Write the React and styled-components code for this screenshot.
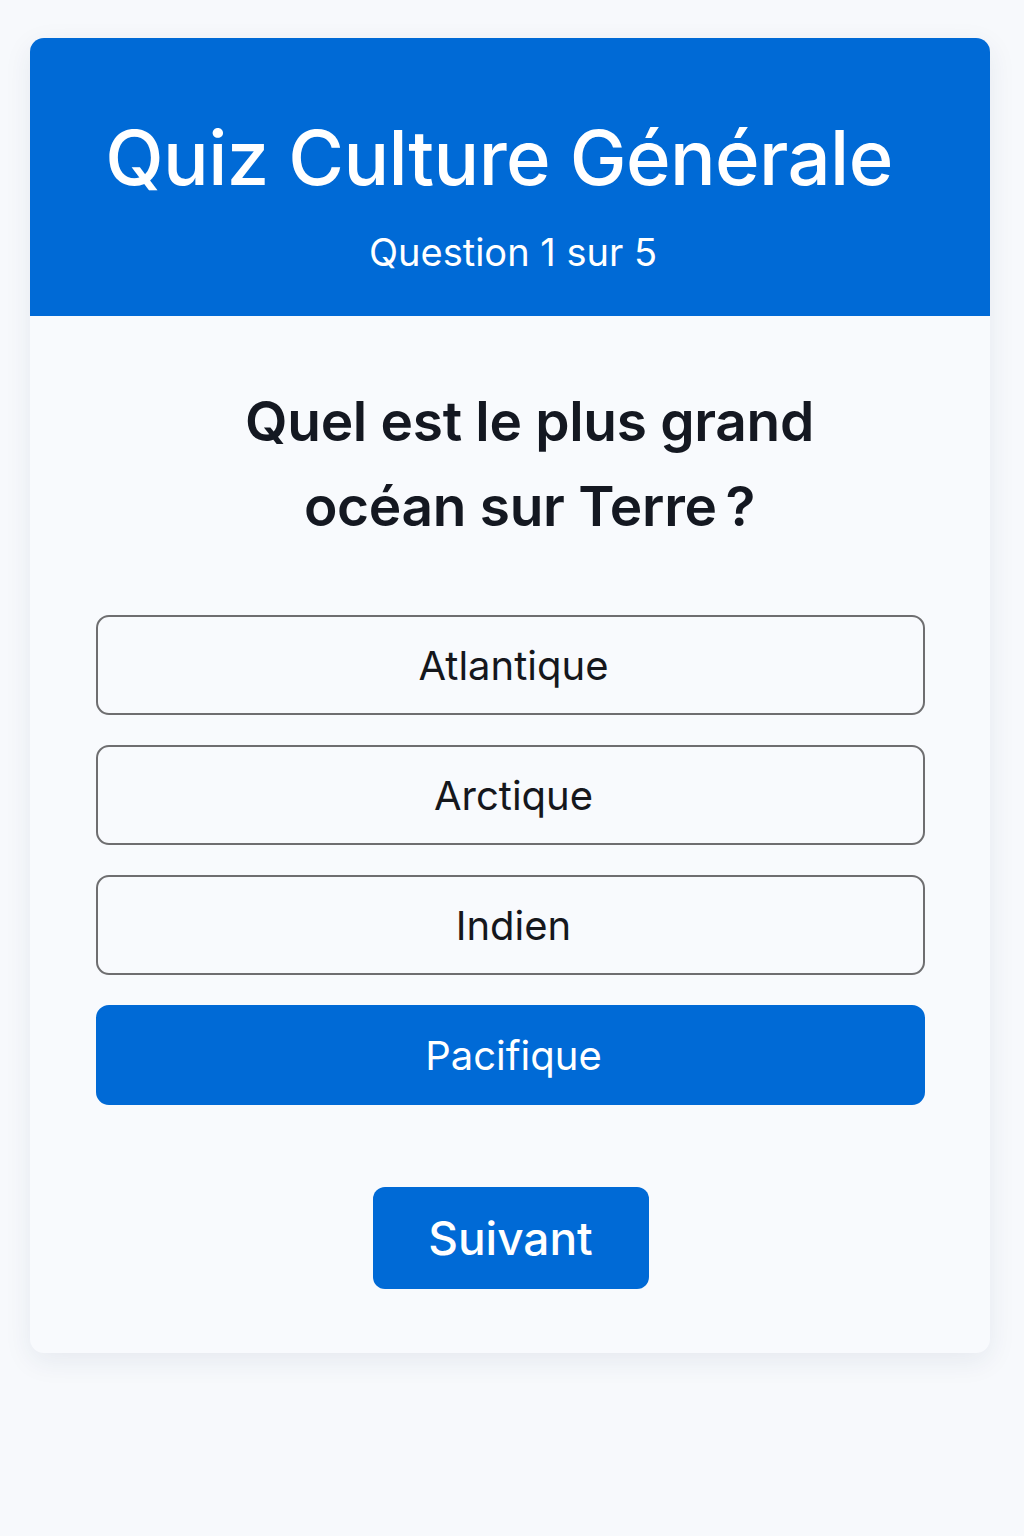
import React from 'react';
import styled, { createGlobalStyle } from 'styled-components';

const GlobalStyle = createGlobalStyle`
  body {
    margin: 0;
    background: #f7f9fc;
    font-family: Inter, "Noto Sans", sans-serif;
  }
`;

const Page = styled.div`
  padding: 38px 34px 0 30px;
  min-height: 1536px;
  box-sizing: border-box;
`;

const Card = styled.div`
  background: #f8fafd;
  border-radius: 14px;
  overflow: hidden;
  box-shadow: 0 8px 28px rgba(30, 50, 90, 0.08);
`;

const Header = styled.header`
  background: #006ad6;
  height: 278px;
  box-sizing: border-box;
  padding-top: 76px;
  display: flex;
  flex-direction: column;
  align-items: center;
  color: #fff;
`;

const Title = styled.h1`
  margin: 0 22px 0 0;
  font-size: 76px;
  font-weight: 500;
  line-height: 86px;
  letter-spacing: -0.6px;
`;

const Subtitle = styled.div`
  margin: 30px 0 0 6px;
  font-size: 38px;
  font-weight: 400;
  line-height: 44px;
`;

const Body = styled.div`
  padding: 63px 65px 64px 66px;
  display: flex;
  flex-direction: column;
  align-items: center;
`;

const Question = styled.h2`
  margin: 0;
  padding-left: 38px;
  max-width: 620px;
  text-align: center;
  font-size: 55px;
  font-weight: 600;
  line-height: 85px;
  color: #141821;
  letter-spacing: -0.3px;
`;

const Options = styled.div`
  margin-top: 66px;
  width: 100%;
  display: flex;
  flex-direction: column;
  gap: 30px;
`;

const Option = styled.button`
  height: 100px;
  border-radius: 13px;
  border: 2px solid ${(p) => (p.$selected ? '#006ad6' : '#6e6e70')};
  background: ${(p) => (p.$selected ? '#006ad6' : 'transparent')};
  color: ${(p) => (p.$selected ? '#fff' : '#15171c')};
  font-family: Inter, "Noto Sans", sans-serif;
  font-size: 40px;
  font-weight: 400;
  padding: 0 0 0 6px;
  cursor: pointer;
`;

const NextButton = styled.button`
  margin-top: 82px;
  width: 276px;
  height: 102px;
  border: none;
  border-radius: 12px;
  background: #006ad6;
  color: #fff;
  font-family: Inter, "Noto Sans", sans-serif;
  font-size: 46px;
  font-weight: 500;
  cursor: pointer;
`;

const answers = ['Atlantique', 'Arctique', 'Indien', 'Pacifique'];

export default function App() {
  return (
    <>
      <GlobalStyle />
      <Page>
        <Card>
          <Header>
            <Title>Quiz Culture Générale</Title>
            <Subtitle>Question 1 sur 5</Subtitle>
          </Header>
          <Body>
            <Question>Quel est le plus grand océan sur Terre{'\u202F'}?</Question>
            <Options>
              {answers.map((a) => (
                <Option key={a} $selected={a === 'Pacifique'}>
                  {a}
                </Option>
              ))}
            </Options>
            <NextButton>Suivant</NextButton>
          </Body>
        </Card>
      </Page>
    </>
  );
}
